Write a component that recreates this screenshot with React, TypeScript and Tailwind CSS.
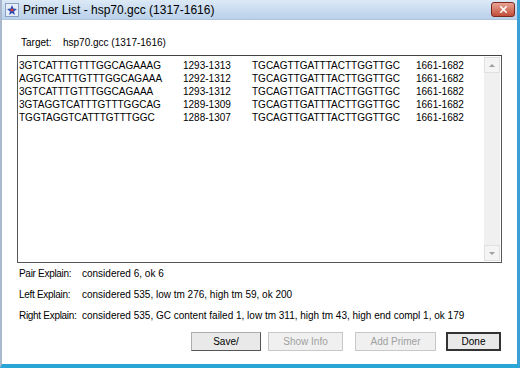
import { X } from "lucide-react";

const rows = [
  ["3GTCATTTGTTTGGCAGAAAG", "1293-1313", "TGCAGTTGATTTACTTGGTTGC", "1661-1682"],
  ["AGGTCATTTGTTTGGCAGAAA", "1292-1312", "TGCAGTTGATTTACTTGGTTGC", "1661-1682"],
  ["3GTCATTTGTTTGGCAGAAA", "1293-1312", "TGCAGTTGATTTACTTGGTTGC", "1661-1682"],
  ["3GTAGGTCATTTGTTTGGCAG", "1289-1309", "TGCAGTTGATTTACTTGGTTGC", "1661-1682"],
  ["TGGTAGGTCATTTGTTTGGC", "1288-1307", "TGCAGTTGATTTACTTGGTTGC", "1661-1682"],
];

const explains = [
  ["Pair Explain:", "considered 6, ok 6"],
  ["Left Explain:", "considered 535, low tm 276, high tm 59, ok 200"],
  ["Right Explain:", "considered 535, GC content failed 1, low tm 311, high tm 43, high end compl 1, ok 179"],
];

function AppIcon() {
  return (
    <svg width="14" height="14" viewBox="0 0 14 14">
      <rect x="0.5" y="0.5" width="13" height="13" fill="#e8eef8" stroke="#8aa0c0" />
      <path d="M7 2 L8.5 5.5 L12 6 L9 8.5 L10 12 L7 10 L4 12 L5 8.5 L2 6 L5.5 5.5 Z" fill="#2c4fb5" />
      <circle cx="7" cy="7" r="1.6" fill="#d23a3a" />
    </svg>
  );
}

export default function App() {
  return (
    <div
      className="w-[520px] h-[368px] flex flex-col bg-white border-l-2 border-l-[#a9b8cc] border-r-[3px] border-r-[#3aa0d8] border-b-[4px] border-b-[#2aa6d6] overflow-hidden text-black whitespace-nowrap"
      style={{ fontFamily: '"Liberation Sans", Arial, sans-serif' }}
    >
      {/* Title bar */}
      <div className="h-[20px] flex items-center bg-gradient-to-b from-[#dce9f6] to-[#b9d1ea] border-b border-[#b0c4dc] pl-[3px] pr-[2px]">
        <AppIcon />
        <span className="ml-[4px] text-[12px] leading-none text-black">Primer List - hsp70.gcc (1317-1616)</span>
        <div className="ml-auto w-[24px] h-[15px] rounded-[3px] flex items-center justify-center bg-gradient-to-b from-[#e8a395] to-[#c24b38] border border-[#7a2a20]">
          <X size={11} strokeWidth={3.5} className="text-white" />
        </div>
      </div>

      {/* Body */}
      <div className="flex-1 flex flex-col px-[15px] pt-[15px] text-[10px]">
        <div className="flex pl-[4px] h-[14px] items-center">
          <span className="w-[42px]">Target:</span>
          <span>hsp70.gcc (1317-1616)</span>
        </div>

        <div className="mt-[6px] h-[208px] flex border border-[#555] border-t-[#444] bg-white">
          <div className="flex-1 pt-[3px] pl-[1px] leading-[13px]">
            {rows.map((r, i) => (
              <div key={i} className="flex h-[13px] items-center">
                <span className="w-[164px]">{r[0]}</span>
                <span className="w-[69px]">{r[1]}</span>
                <span className="w-[164px]">{r[2]}</span>
                <span>{r[3]}</span>
              </div>
            ))}
          </div>
          <div className="w-[16px] bg-[#f0f0f0] flex flex-col justify-between my-[1px] mr-[1px]">
            <div className="h-[16px] flex items-center justify-center border border-[#e0e0e0] bg-[#f4f4f4]">
              <span className="w-0 h-0 border-l-[3px] border-r-[3px] border-b-[3px] border-l-transparent border-r-transparent border-b-[#a0a0a0]" />
            </div>
            <div className="h-[16px] flex items-center justify-center border border-[#e0e0e0] bg-[#f4f4f4]">
              <span className="w-0 h-0 border-l-[3px] border-r-[3px] border-t-[3px] border-l-transparent border-r-transparent border-t-[#a0a0a0]" />
            </div>
          </div>
        </div>

        <div className="flex flex-col pl-[2px]">
          {explains.map(([k, v]) => (
            <div key={k} className="flex h-[21px] items-center">
              <span className="w-[63px] tracking-[-0.3px]">{k}</span>
              <span>{v}</span>
            </div>
          ))}
        </div>

        <div className="mt-[6px] flex justify-end gap-[8px] pr-[1px]">
          <button className="w-[70px] h-[19px] border border-[#adadad] border-r-[#555] border-b-[#555] bg-[#e9e9e9] text-[10px] font-normal">Save/</button>
          <button className="w-[75px] h-[19px] border border-[#c8c8c8] bg-[#f0f0f0] text-[10px] font-normal text-[#a0a0a0] ml-[-1px]">Show Info</button>
          <button className="w-[81px] h-[19px] border border-[#c8c8c8] bg-[#f0f0f0] text-[10px] font-normal text-[#a0a0a0] ml-[4px]">Add Primer</button>
          <button className="w-[55px] h-[19px] border-2 border-[#333] bg-[#e9e9e9] text-[10px] font-normal ml-[2px]">Done</button>
        </div>
      </div>
    </div>
  );
}
